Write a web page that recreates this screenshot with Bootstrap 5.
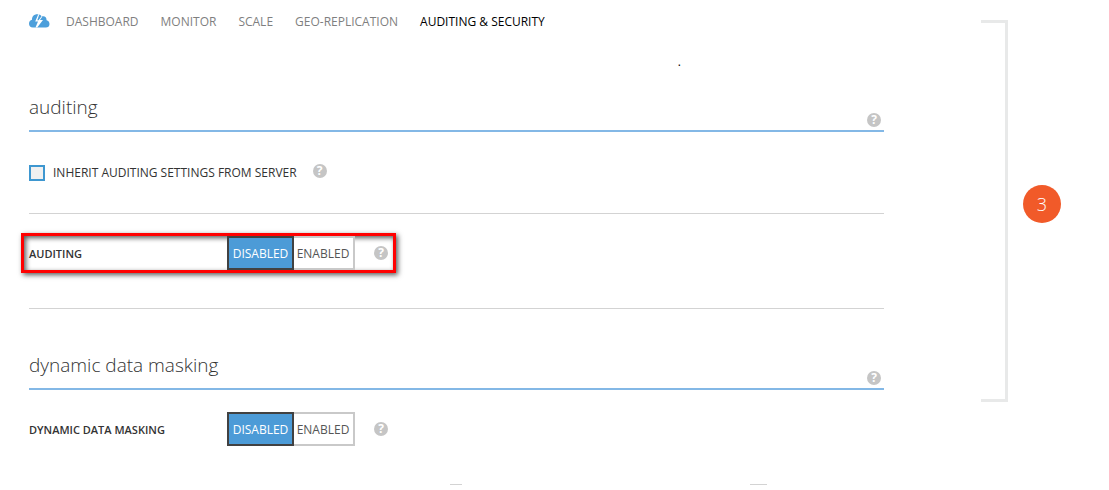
<!DOCTYPE html>
<html lang="en">
<head>
<meta charset="utf-8">
<meta name="viewport" content="width=device-width, initial-scale=1">
<title>Auditing &amp; Security</title>
<link href="https://cdn.jsdelivr.net/npm/bootstrap@5.3.0/dist/css/bootstrap.min.css" rel="stylesheet">
<script src="https://cdn.jsdelivr.net/npm/bootstrap@5.3.0/dist/js/bootstrap.bundle.min.js" defer></script>
<style>
body{font-family:"Open Sans","Noto Sans",sans-serif;font-size:12px;line-height:16px;color:#333;background:#fff}
.page{padding:0 48px 0 21px}
.main-col{margin-right:97px;min-width:0}
.tabs-row{height:42px;padding:2px 0 0 8px}
.cloud{width:21px;height:14px;margin:0 16px 2px 0}
.tabs-row .nav{gap:22px}
.tabs-row .nav-link{padding:0;color:#7f7f7f}
.tabs-row .nav-link.active{color:#000}
.note{height:46px;padding:12px 203px 0 0;color:#000}
.section-head{margin-left:8px;height:44px;border-bottom:2px solid #83b8e6;padding:0 3px 3px 0}
.section-head h2{font-size:19px;line-height:26px;font-weight:300;margin:0;padding-top:6px;color:#333}
.help{width:14px;height:14px;flex:none;padding:0;border:0;border-radius:50%;background:#c5c5c5;color:#fff;font-size:12px;font-weight:700;line-height:14px;text-align:center}
.inherit{height:82px;margin-left:8px;border-bottom:1px solid #d3d3d3}
.inherit .form-check-input{width:16px;height:16px;margin:0 8px 0 0;border:2px solid #3e97d0;border-radius:0;background-color:#f0f0f0}
.inherit .help{margin:0 0 4px 16px}
.setting{width:375px;height:40px;padding:0 5px;border:3px solid transparent}
.setting-name{width:198px;font-weight:600;font-size:11px;padding-top:2px}
.setting .help{margin-left:19px}
.marked{border-color:#f00;box-shadow:2px 2px 5px rgba(0,0,0,.65),inset 2px 2px 5px rgba(0,0,0,.65)}
.audit-row{padding:19px 0 35px}
.audit-rule{margin-left:8px;border-bottom:1px solid #d3d3d3}
.masking{padding-top:37px}
.masking-row{padding:19px 0 35px}
.toggle .btn{height:34px;padding:2px 0 0;border-radius:0;font-size:12px;line-height:16px;border:2px solid #c9c9c9;background:#fff;color:#555}
.toggle .btn.on{width:67px;flex:none;border-color:#414141;background:#4c9bd7;color:#fff;z-index:1}
.toggle .btn.off{width:62px;flex:none;margin-left:0;border-left:0}
.dashes{gap:288px;padding-left:429px}
.dash{width:12px;height:1px;background:#d3d3d3}
.dash-wide{width:17px}
.bracket{width:27px;height:382px;margin-top:20px;border:3px solid #e8e9e9;border-left:0}
.step{width:38px;height:38px;margin:185px 0 0 15px;background:#f15a29;color:#fff;font-size:18px;line-height:18px;font-weight:300}
</style>
</head>
<body>
<div class="page d-flex align-items-start">
  <main class="main-col flex-grow-1">
    <header class="tabs-row d-flex align-items-center">
      <svg class="cloud" viewBox="0 0 21 14" aria-hidden="true"><path fill="#4c9fdb" d="M3.800 13.500C1.500 13.500 0 11.900 0 9.700C0 7.700 1.200 6.200 3 5.800C2.900 2.400 5 .3 8.300 .3C10.400 .3 11.800 1 12.800 2.600C15.600 1.600 17.600 3.500 17.600 6.200C19.400 6.700 20.500 8 20.500 9.900C20.500 12.100 19 13.500 16.900 13.500Z"/><path fill="#fff" d="M9.300 .3L6.200 7.500H9L6.500 13.500H8.200L14 6H11L13.200 2.800L12.700 2L9.600 6.200H8.300L10.300 .3Z"/></svg>
      <nav class="nav flex-nowrap">
        <a class="nav-link" href="#">DASHBOARD</a>
        <a class="nav-link" href="#">MONITOR</a>
        <a class="nav-link" href="#">SCALE</a>
        <a class="nav-link" href="#">GEO-REPLICATION</a>
        <a class="nav-link active" aria-current="page" href="#">AUDITING &amp; SECURITY</a>
      </nav>
    </header>
    <div class="note text-end">.</div>

    <section>
      <div class="section-head d-flex justify-content-between">
        <h2>auditing</h2>
        <button class="help align-self-end" type="button" aria-label="Help on auditing">?</button>
      </div>
      <div class="inherit d-flex align-items-center">
        <input class="form-check-input" type="checkbox" id="inherit">
        <label for="inherit">INHERIT AUDITING SETTINGS FROM SERVER</label>
        <button class="help" type="button" aria-label="Help on inheriting">?</button>
      </div>
      <div class="audit-row">
        <div class="setting marked d-flex align-items-center">
          <span class="setting-name">AUDITING</span>
          <div class="toggle btn-group" role="group" aria-label="Auditing">
            <button type="button" class="btn on">DISABLED</button>
            <button type="button" class="btn off">ENABLED</button>
          </div>
          <button class="help" type="button" aria-label="Help on the auditing switch">?</button>
        </div>
      </div>
      <div class="audit-rule"></div>
    </section>

    <section class="masking">
      <div class="section-head d-flex justify-content-between">
        <h2>dynamic data masking</h2>
        <button class="help align-self-end" type="button" aria-label="Help on masking">?</button>
      </div>
      <div class="masking-row">
        <div class="setting d-flex align-items-center">
          <span class="setting-name">DYNAMIC DATA MASKING</span>
          <div class="toggle btn-group" role="group" aria-label="Dynamic data masking">
            <button type="button" class="btn on">DISABLED</button>
            <button type="button" class="btn off">ENABLED</button>
          </div>
          <button class="help" type="button" aria-label="Help on the masking switch">?</button>
        </div>
      </div>
      <div class="dashes d-flex">
        <div class="dash"></div>
        <div class="dash dash-wide"></div>
      </div>
    </section>
  </main>
  <div class="bracket flex-shrink-0"></div>
  <div class="step rounded-circle d-flex align-items-center justify-content-center flex-shrink-0">3</div>
</div>
</body>
</html>
